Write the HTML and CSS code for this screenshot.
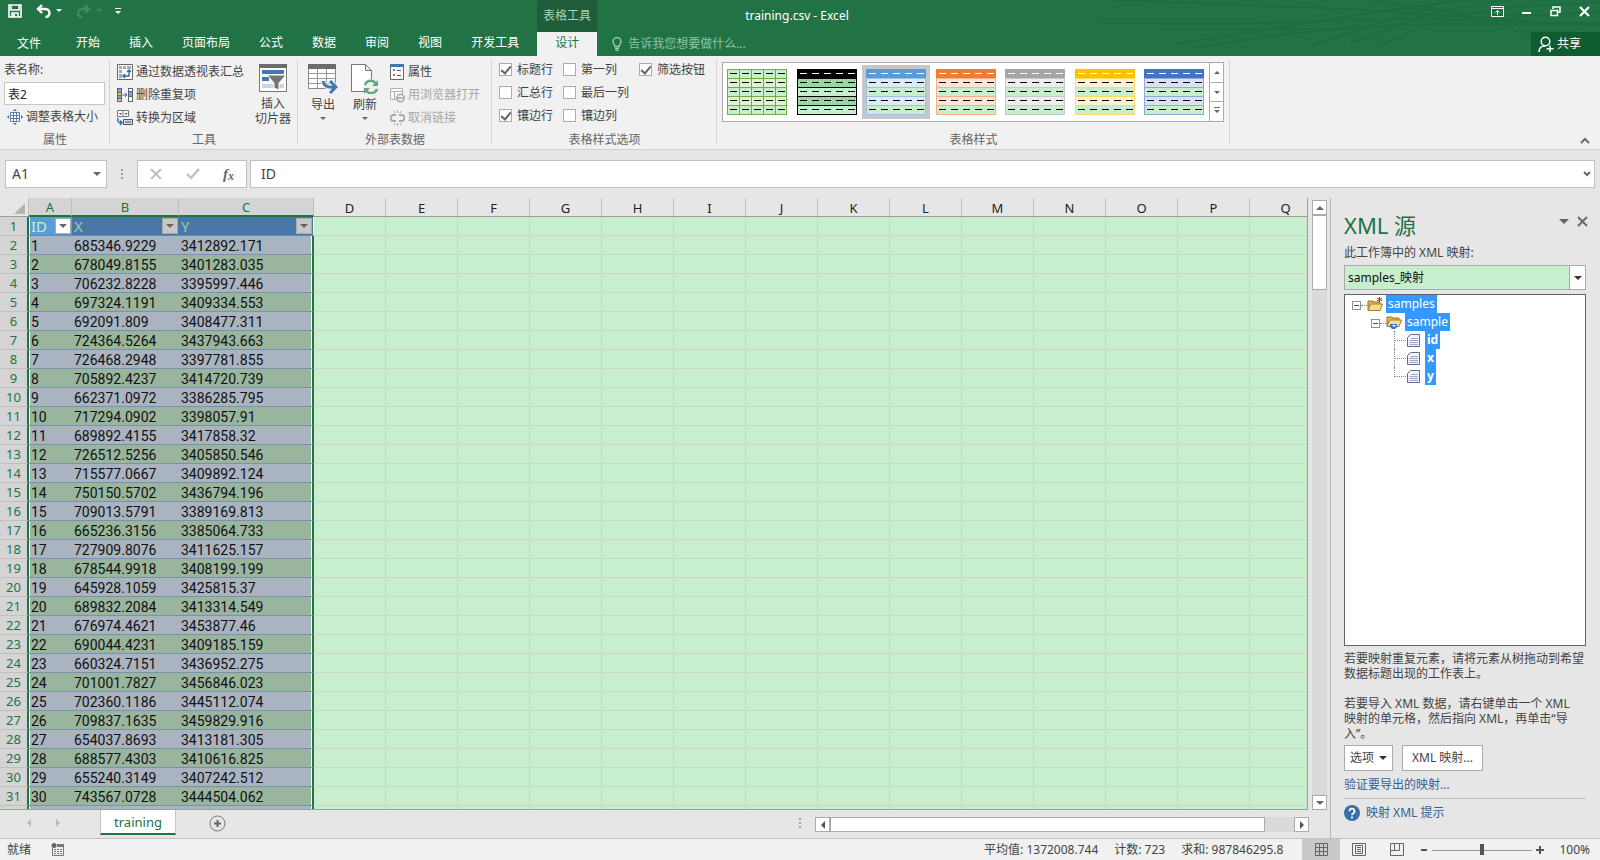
FILE: index.html
```
<!DOCTYPE html>
<html lang="zh-CN">
<head>
<meta charset="utf-8">
<title>training.csv - Excel</title>
<link rel="stylesheet" href="styles.css">
</head>
<body>
<header class="top">
  <svg class="swirl" width="500" height="56" viewBox="0 0 500 56" fill="none" stroke="#1e6b40" stroke-width="1.5" aria-hidden="true">
    <path d="M10 0L250 9L500 26M0 23L150 23L300 19L500 23M60 29L230 29L330 24L500 24M75 44L170 29L290 10L370 0M95 48L170 36L260 27M270 0L330 8L400 24L445 44M210 46L320 10L350 0M250 43L330 14L400 0M280 46L340 18L420 6L500 3M300 8L420 16L500 12"/>
  </svg>
  <div class="titlebar">
    <div class="title-left">
      <div class="qat">
        <button aria-label="保存"><svg width="14" height="14" viewBox="0 0 14 14"><path d="M1 1h12v12H1zM3 1v5h8V1M4 13V9h6v4" fill="none" stroke="#fff" stroke-width="1.6"/><path d="M5 10h2v3H5z" fill="#fff"/></svg></button>
        <button class="undo" aria-label="撤消"><svg width="26" height="14" viewBox="0 0 26 14"><path d="M2 5H9.500a4 4 0 0 1 0 8M6 1L2 5l4 4" fill="none" stroke="#fff" stroke-width="2.400"/><path d="M20 5h6l-3 3z" fill="#fff"/></svg></button>
        <button class="redo" aria-label="恢复" disabled><svg width="26" height="14" viewBox="0 0 26 14"><path d="M13 5H6a4 4 0 0 0 0 8M9 1l4 4-4 4" fill="none" stroke="#438a61" stroke-width="2.400"/><path d="M20 5h6l-3 3z" fill="#438a61"/></svg></button>
        <button class="more" aria-label="自定义"><svg width="6" height="7" viewBox="0 0 6 7"><path d="M0 0h6v1H0zM0 3h6L3 6z" fill="#fff"/></svg></button>
      </div>
      <div class="context">表格工具</div>
    </div>
    <div class="title">training.csv - Excel</div>
    <div class="winctl">
      <button aria-label="功能区显示选项"><svg width="13" height="11" viewBox="0 0 13 11"><path d="M.5.5h12v10H.5zM.5 2.500h12M6.500 9V5M4.500 6.500l2-2 2 2" fill="none" stroke="#fff"/></svg></button>
      <button aria-label="最小化"><svg width="10" height="11" viewBox="0 0 10 11"><path d="M0 6h9v2H0z" fill="#fff"/></svg></button>
      <button aria-label="还原"><svg width="11" height="11" viewBox="0 0 11 11"><path d="M3 3V1h7v5H8M1 4.500h6.500v5H1z" fill="none" stroke="#fff" stroke-width="1.500"/></svg></button>
      <button aria-label="关闭"><svg width="11" height="11" viewBox="0 0 11 11"><path d="M1 1l9 9M10 1l-9 9" stroke="#fff" stroke-width="2.200"/></svg></button>
    </div>
  </div>
  <nav class="tabs">
    <a class="file" href="#">文件</a><a href="#">开始</a><a href="#">插入</a><a href="#">页面布局</a><a href="#">公式</a><a href="#">数据</a><a href="#">审阅</a><a href="#">视图</a><a href="#">开发工具</a><a class="active" href="#">设计</a>
    <label class="tell"><svg width="10" height="14" viewBox="0 0 10 14"><path d="M3 9.500C3 7.500 1 7 1 4.500a4 4 0 0 1 8 0C9 7 7 7.500 7 9.500zM3 11.500h4M3.500 13.300h3" fill="none" stroke="#9fd0b2" stroke-width="1.300"/></svg><input type="text" placeholder="告诉我您想要做什么..." aria-label="告诉我"></label>
    <button class="share"><svg width="16" height="17" viewBox="0 0 16 17"><path d="M1 16c0-4 2-6 6-6M12 9.500v6.500M8.500 12.700h7" fill="none" stroke="#fff" stroke-width="1.500"/><circle cx="7.500" cy="5.500" r="4.300" fill="none" stroke="#fff" stroke-width="1.500"/></svg>共享</button>
  </nav>
</header>

<section class="ribbon">
  <div class="group g-prop">
    <div class="body col">
      <label for="tname">表名称:</label>
      <input id="tname" class="tname" type="text" value="表2">
      <button class="cmd resize"><svg width="16" height="16" viewBox="0 0 16 16"><path d="M3.500 3.500h9v9h-9zM6.500 3.500v9M9.500 3.500v9M3.500 6.500h9M3.500 9.500h9" fill="#fff" stroke="#5a7fa8"/><path d="M8 0l2 2H6zM8 16l2-2H6zM0 8l2-2v4zM16 8l-2-2v4z" fill="#3f6d9f"/></svg>调整表格大小</button>
    </div>
    <div class="caption">属性</div>
  </div>
  <div class="group g-tools">
    <div class="body">
      <div class="col">
        <button class="cmd"><svg width="16" height="16" viewBox="0 0 16 16"><path d="M.5.500h15v15H.5z" fill="#fff" stroke="#666"/><path d="M2 2h3v3H2zM6 2h3v3H6zM10 2h4v3h-4zM2 6h3v3H2zM2 10h3v4H2z" fill="#aaa"/><path d="M12 6v6H6M10 8l2-2 2 2M8 10l-2 2 2 2" fill="none" stroke="#2f68a8" stroke-width="1.400"/></svg>通过数据透视表汇总</button>
        <button class="cmd"><svg width="16" height="14" viewBox="0 0 16 14"><path d="M0 0h5v14H0zM11 0h5v14h-5z" fill="#5b6670"/><path d="M1 1h3v3H1zM1 8h3v2H1zM12 4h3v4h-3z" fill="#7ba3cf"/><path d="M1 5h3v2H1zM1 11h3v2H1z" fill="#f4c46c"/><path d="M12 1h3v2h-3zM12 9h3v4h-3z" fill="#fff"/><path d="M5.500 7H10M8 5l2 2-2 2" fill="none" stroke="#2f68a8"/></svg>删除重复项</button>
        <button class="cmd"><svg width="16" height="16" viewBox="0 0 16 16"><path d="M.5.500h11v6H.5zM6 .5v6" fill="#fff" stroke="#777"/><path d="M2 3h3L3.500 5zM7.500 3h3L9 5z" fill="#555"/><path d="M6.500 9.500h9v5h-9z" fill="#c9dcf0" stroke="#555"/><path d="M8 12h6" stroke="#555"/><path d="M1 8c-1 4 1 5 4 4.500M3 10.500l2 2-2 2.500" fill="none" stroke="#2f68a8" stroke-width="1.400"/></svg>转换为区域</button>
      </div>
      <button class="big slicer"><svg width="28" height="28" viewBox="0 0 28 28"><path d="M.5.500h27v27H.5z" fill="#fff" stroke="#777"/><path d="M0 0h28v4H0z" fill="#6b6b6b"/><path d="M3 6h22v4H3zM3 13h7v4H3z" fill="#3f78b5"/><path d="M3 20h22v4H3z" fill="#c9d6e4"/><path d="M8 11h19l-7 8v7l-5-2v-5z" fill="#747474" stroke="#fff"/></svg><span>插入</span><span>切片器</span></button>
    </div>
    <div class="caption">工具</div>
  </div>
  <div class="group g-ext">
    <div class="body">
      <button class="big"><svg width="30" height="30" viewBox="0 0 30 30"><path d="M.5.500h27v24H.5z" fill="#fff" stroke="#888"/><path d="M.5 9.500h27M.5 14.500h27M.5 19.500h27M9.500 4v20M18.500 4v20" stroke="#999" fill="none"/><path d="M0 0h28v5H0z" fill="#6b6b6b"/><path d="M15 17c1 5 5 7 12 6M22 17l6 6-6 6" fill="none" stroke="#f0f0f0" stroke-width="5"/><path d="M15 17c1 5 5 7 12 6M22 17l6 6-6 6" fill="none" stroke="#3f78b5" stroke-width="3"/></svg><span>导出</span><i class="tri"></i></button>
      <button class="big"><svg width="28" height="30" viewBox="0 0 28 30"><path d="M.5.500h14l6 6v21H.5zM14.500.500v6h6" fill="#fff" stroke="#777"/><circle cx="20" cy="23" r="8" fill="#f0f0f0"/><path d="M14 21a6 6 0 0 1 11-1M26 25a6 6 0 0 1-11 1" fill="none" stroke="#68a583" stroke-width="2.500"/><path d="M27 16v6h-6zM13 30v-6h6z" fill="#68a583"/></svg><span>刷新</span><i class="tri"></i></button>
      <div class="col">
        <button class="cmd"><svg width="15" height="16" viewBox="0 0 15 16"><path d="M.5.500h13v15H.5z" fill="#fff" stroke="#666"/><path d="M0 0h14v3H0z" fill="#3f78b5"/><path d="M7 6.500h4M7 11.500h4M3.500 5.500h1v1h-1zM3.500 10.500h1v1h-1z" stroke="#555" fill="none"/></svg>属性</button>
        <button class="cmd" disabled><svg width="15" height="16" viewBox="0 0 15 16"><path d="M.5 1.500h12v11H.5zM.5 4.500h12M4.500 4.500v8" fill="#fafafa" stroke="#b0b0b0"/><circle cx="10.500" cy="11" r="3.700" fill="#f0f0f0" stroke="#a8a8a8" stroke-width="1.500"/><path d="M7 11h7" stroke="#a8a8a8" stroke-width="1.500"/></svg>用浏览器打开</button>
        <button class="cmd" disabled><svg width="15" height="16" viewBox="0 0 15 16"><path d="M6 5H3.500a3 3 0 0 0 0 6H6M9 5h2.500a3 3 0 0 1 0 6H9" fill="none" stroke="#a8a8a8" stroke-width="2"/><path d="M7.500 0v3M7.500 13v3M4 1l1 2M11 1l-1 2M4 15l1-2M11 15l-1-2" stroke="#a8a8a8"/></svg>取消链接</button>
      </div>
    </div>
    <div class="caption">外部表数据</div>
  </div>
  <div class="group g-opt">
    <div class="body checks">
      <label><input type="checkbox" checked>标题行</label><label><input type="checkbox">第一列</label><label><input type="checkbox" checked>筛选按钮</label>
      <label><input type="checkbox">汇总行</label><label><input type="checkbox">最后一列</label><span></span>
      <label><input type="checkbox" checked>镶边行</label><label><input type="checkbox">镶边列</label><span></span>
    </div>
    <div class="caption">表格样式选项</div>
  </div>
  <div class="group g-style">
    <div class="body">
      <div class="gallery">
        <div class="swatches" id="swatches"></div>
        <div class="gal-nav">
          <button aria-label="上一行"><i class="tri up"></i></button>
          <button aria-label="下一行"><i class="tri"></i></button>
          <button aria-label="其他"><i class="tri bar"></i></button>
        </div>
      </div>
    </div>
    <div class="caption">表格样式</div>
  </div>
  <button class="collapse" aria-label="折叠功能区"><svg width="10" height="7" viewBox="0 0 10 7"><path d="M1 6l4-4 4 4" fill="none" stroke="#6a6a6a" stroke-width="2"/></svg></button>
</section>

<section class="formula">
  <div class="namebox"><input type="text" value="A1" aria-label="名称框"><button aria-label="名称列表"><i class="tri wide"></i></button></div>
  <span class="dots"></span>
  <div class="fx">
    <button aria-label="取消"><svg width="12" height="12" viewBox="0 0 12 12"><path d="M1 1l10 10M11 1L1 11" stroke="#bdbdbd" stroke-width="1.800"/></svg></button>
    <button aria-label="输入"><svg width="14" height="12" viewBox="0 0 14 12"><path d="M1 6l4 4 8-9" fill="none" stroke="#bdbdbd" stroke-width="2.200"/></svg></button>
    <button class="fxb" aria-label="插入函数">f<small>x</small></button>
  </div>
  <div class="fbar"><input type="text" value="ID" aria-label="编辑栏"><button aria-label="展开编辑栏"><svg width="8" height="6" viewBox="0 0 8 6"><path d="M1 1l3 3 3-3" fill="none" stroke="#666" stroke-width="2"/></svg></button></div>
</section>

<main class="work">
  <div class="left">
    <div class="sheetrow">
      <div class="sheet">
        <table class="grid">
          <colgroup><col class="c-h"><col class="c-a"><col class="c-b"><col class="c-c"><col span="14" class="c-d"></colgroup>
          <thead id="ghead"></thead>
          <tbody id="gbody"></tbody>
        </table>
      </div>
      <div class="vscroll"><button aria-label="向上滚动"><i class="tri up big-t"></i></button><div class="vthumb"></div><div class="fill"></div><button aria-label="向下滚动"><i class="tri big-t"></i></button></div>
    </div>
    <div class="sheetbar">
      <button class="nav1" aria-label="上一个工作表"><i class="tri l pale"></i></button>
      <button class="nav2" aria-label="下一个工作表"><i class="tri r pale"></i></button>
      <a class="sheettab" href="#">training</a>
      <button class="add" aria-label="新工作表"><svg width="17" height="17" viewBox="0 0 17 17"><circle cx="8.500" cy="8.500" r="7.500" fill="none" stroke="#777"/><path d="M8.500 5v7M5 8.500h7" stroke="#666" stroke-width="2"/></svg></button>
      <span class="dots"></span>
      <div class="hscroll"><button aria-label="向左滚动"><i class="tri l"></i></button><div class="hthumb"></div><div class="fill"></div><button aria-label="向右滚动"><i class="tri r"></i></button></div>
    </div>
  </div>
  <aside class="pane">
    <div class="pane-head"><h2>XML 源</h2><button aria-label="任务窗格选项"><i class="tri pane-t"></i></button><button aria-label="关闭窗格"><svg width="11" height="11" viewBox="0 0 11 11"><path d="M1 1l9 9M10 1l-9 9" stroke="#6a6a6a" stroke-width="2"/></svg></button></div>
    <label class="maplabel" for="map">此工作簿中的 XML 映射:</label>
    <div class="selwrap"><select id="map"><option>samples_映射</option></select><span class="selarrow"><i class="tri wide dark"></i></span></div>
    <ul class="tree" id="tree">
      <li class="lv0"><i class="pm"></i><svg width="16" height="15" viewBox="0 0 16 15"><path d="M1 4h5l1 1h6v8H1z" fill="#e3b04e" stroke="#9c7428"/><path d="M3.500 7H15.500L13 13.500H1z" fill="#fbdc86" stroke="#a67e2e"/><path d="M12.500 0v5M10 1.200l5 2.600M15 1.200l-5 2.600" stroke="#e02020"/></svg><span>samples</span></li>
      <li class="lv1"><i class="pm"></i><svg width="16" height="15" viewBox="0 0 16 15"><path d="M1 2h5l1 1h6v8H1z" fill="#e3b04e" stroke="#9c7428"/><path d="M3.500 5H15.500L13 11.500H1z" fill="#fbdc86" stroke="#a67e2e"/><path d="M4 9h7v3l-2 2H6l-2-2z" fill="#3f78c8"/><path d="M6 10h4l-2 2z" fill="#fff"/></svg><span>sample</span></li>
      <li class="lv2"><svg width="13" height="13" viewBox="0 0 13 13"><path d="M3.500.500h9v12h-12v-9z" fill="#f2f5fc" stroke="#5d6b92"/><path d="M4 4.500h7M2.500 6.500H11M2.500 8.500H11M2.500 10.500H11" stroke="#9aa8cc"/></svg><span>id</span></li>
      <li class="lv2"><svg width="13" height="13" viewBox="0 0 13 13"><path d="M3.500.500h9v12h-12v-9z" fill="#f2f5fc" stroke="#5d6b92"/><path d="M4 4.500h7M2.500 6.500H11M2.500 8.500H11M2.500 10.500H11" stroke="#9aa8cc"/></svg><span>x</span></li>
      <li class="lv2"><svg width="13" height="13" viewBox="0 0 13 13"><path d="M3.500.500h9v12h-12v-9z" fill="#f2f5fc" stroke="#5d6b92"/><path d="M4 4.500h7M2.500 6.500H11M2.500 8.500H11M2.500 10.500H11" stroke="#9aa8cc"/></svg><span>y</span></li>
    </ul>
    <p class="hint">若要映射重复元素，请将元素从树拖动到希望数据标题出现的工作表上。</p>
    <p class="hint">若要导入 XML 数据，请右键单击一个 XML<br>映射的单元格，然后指向 XML，再单击“导<br>入”。</p>
    <div class="btns"><button>选项<i class="tri wide dark"></i></button><button class="wide-b">XML 映射...</button></div>
    <a class="verify" href="#">验证要导出的映射...</a>
    <a class="tips" href="#"><svg width="16" height="16" viewBox="0 0 16 16"><circle cx="8" cy="8" r="8" fill="#376fa8"/><path d="M5.500 6.200a2.500 2.500 0 1 1 3.800 2C8.300 8.800 8 9 8 10.300M8 11.500v2" fill="none" stroke="#fff" stroke-width="1.800"/></svg>映射 XML 提示</a>
  </aside>
</main>

<footer class="status">
  <span class="ready">就绪</span>
  <svg width="13" height="13" viewBox="0 0 13 13"><path d="M1.500 5v7.500h11v-10H6" fill="none" stroke="#777"/><circle cx="3" cy="2.500" r="2.500" fill="#666"/><path d="M6 1h7v3H6z" fill="#777"/><path d="M3 6.500h8M3 8.500h8M3 10.500h8" stroke="#777" stroke-dasharray="2 1"/></svg>
  <span class="stat first">平均值: 1372008.744</span><span class="stat">计数: 723</span><span class="stat">求和: 987846295.8</span>
  <div class="views">
    <button class="on" aria-label="普通"><svg width="13" height="13" viewBox="0 0 13 13"><path d="M.5.500h12v12H.5zM4.500.500v12M8.500.500v12M.5 4.500h12M.5 8.500h12" fill="none" stroke="#666"/></svg></button>
    <button aria-label="页面布局"><svg width="14" height="13" viewBox="0 0 14 13"><path d="M.5.500h13v12H.5zM3.500 2.500h7v8h-7zM5 4.500h4M5 6.500h4M5 8.500h4" fill="none" stroke="#666"/></svg></button>
    <button aria-label="分页预览"><svg width="14" height="13" viewBox="0 0 14 13"><path d="M.5.500h13v12H.5zM4.500.500v7M9.500.500v7M.5 7.500h9" fill="none" stroke="#666"/></svg></button>
  </div>
  <div class="zoom">
    <button aria-label="缩小"><svg width="8" height="8" viewBox="0 0 8 8"><path d="M1 3h6v2H1z" fill="#555"/></svg></button>
    <input type="range" min="10" max="190" value="100" aria-label="缩放">
    <button aria-label="放大"><svg width="8" height="8" viewBox="0 0 8 8"><path d="M0 4h8M4 0v8" stroke="#555" stroke-width="2"/></svg></button>
    <span>100%</span>
  </div>
</footer>
<script src="grid.js"></script>
</body>
</html>
```
FILE: styles.css
```
* { box-sizing: border-box; }
html, body { height: 100%; margin: 0; }
body {
  display: flex; flex-direction: column; overflow: hidden;
  font-family: "Noto Sans", "Noto Sans CJK SC", sans-serif;
  font-size: 12px; line-height: 16px; color: #444; background: #e6e6e6;
}
button, input, select { font: inherit; color: inherit; margin: 0; padding: 0; border: 0; background: none; border-radius: 0; }
button { display: inline-flex; align-items: center; justify-content: center; }
a { color: inherit; text-decoration: none; }
svg { display: block; flex: none; }
ul { list-style: none; margin: 0; padding: 0; }

.tri { display: block; flex: none; width: 0; height: 0; border: 3px solid transparent; border-top-color: #666; border-bottom: 0; }
.tri.up { border-bottom: 3px solid #666; border-top: 0; }
.tri.wide { border-width: 4px 4px 0; }
.tri.dark { border-top-color: #333; }
.tri.big-t { border-width: 4px 4px 0; }
.tri.up.big-t { border-width: 0 4px 4px; }
.tri.pane-t { border-width: 5px 5px 0; }
.tri.l { border: 4px solid transparent; border-left: 0; border-right-color: #555; }
.tri.r { border: 4px solid transparent; border-right: 0; border-left-color: #555; }
.tri.l.pale { border-right-color: #bbb; }
.tri.r.pale { border-left-color: #bbb; }
.tri.bar { position: relative; }
.tri.bar::before { content: ""; position: absolute; left: -3px; top: -6px; width: 6px; height: 1px; background: #666; }

/* title bar and tabs */
.top { position: relative; background: #217346; color: #fff; flex: none; }
.swirl { position: absolute; right: 0; top: 0; }
.titlebar, .tabs { position: relative; display: flex; }
.titlebar { display: grid; grid-template-columns: 1fr auto 1fr; height: 32px; padding-right: 6px; }
.title-left { display: flex; }
.qat { display: flex; align-items: center; width: 537px; padding: 0 0 10px 8px; }
.undo { margin-left: 14px; }
.redo { margin-left: 14px; }
.more { margin-left: 13px; }
.context { width: 60px; line-height: 32px; text-align: center; background: #1e5c3a; color: #a9d3b8; }
.title { line-height: 32px; }
.winctl { display: flex; justify-content: flex-end; align-items: center; gap: 18px; padding: 0 4px 9px 0; }
.tabs { height: 24px; padding-left: 3px; line-height: 22px; }
.tabs a { padding: 0 14px 0 15px; white-space: nowrap; }
.tabs .file { padding: 1px 20px 0 14px; }
.tabs .active { width: 60px; margin-left: 4px; padding: 0; text-align: center; background: #f1f1f1; color: #217346; }
.tell { display: flex; align-items: center; gap: 6px; margin-left: 15px; }
.tell input { width: 160px; }
.tell input::placeholder { color: #8fc4a4; opacity: 1; }
.share { margin-left: auto; width: 69px; gap: 3px; padding-right: 12px; background: #0e5c2f; }

/* ribbon */
.ribbon { position: relative; display: flex; flex: none; height: 94px; padding: 2px 0 1px; background: #f1f1f1; border-bottom: 1px solid #d0d0d0; }
.group { display: flex; flex-direction: column; justify-content: space-between; position: relative; }
.group::after { content: ""; position: absolute; right: 0; top: 2px; bottom: 4px; width: 1px; background: #d5d5d5; }
.body { display: flex; height: 72px; padding-top: 2px; }
.col { display: flex; flex-direction: column; }
.caption { text-align: center; color: #666; line-height: 16px; }
.cmd { justify-content: flex-start; gap: 3px; height: 23px; white-space: nowrap; }
.cmd:disabled { color: #a6a6a6; }
.big { flex-direction: column; justify-content: flex-start; line-height: 15px; padding-top: 4px; }
.big svg { margin-bottom: 3px; }
.big .tri { margin-top: 5px; }
.g-prop { width: 110px; }
.g-prop .body { padding-left: 4px; }
.g-prop label { line-height: 20px; }
.tname { width: 101px; height: 23px; margin-top: 2px; padding: 0 3px; background: #fff; border: 1px solid #c6c6c6; color: #222; }
.resize { margin: 0 0 0 3px; }
.g-tools { width: 188px; }
.g-tools .body { padding-left: 7px; justify-content: space-between; }
.slicer { width: 50px; }
.slicer svg { margin-bottom: 4px; }
.g-ext { width: 194px; }
.g-ext .body { padding-left: 4px; }
.g-ext .big { width: 42px; }
.g-ext .col { margin-left: 4px; }
.g-opt { width: 225px; }
.checks { display: grid; grid-template-columns: 64px 76px 1fr; grid-template-rows: repeat(3, 23px); padding: 0 0 0 7px; }
.checks label { display: flex; align-items: center; gap: 5px; white-space: nowrap; }
.checks input { appearance: none; width: 13px; height: 13px; background: #fff; border: 1px solid #ababab; position: relative; }
.checks input:checked::after { content: ""; position: absolute; left: 3px; top: 0; width: 4px; height: 8px; border: solid #666; border-width: 0 2px 2px 0; transform: rotate(40deg); }
.g-style { width: 513px; }
.g-style .body { padding: 4px 6px 0 5px; }
.gallery { display: flex; flex: 1; height: 60px; background: #fff; border: 1px solid #ababab; }
.swatches { display: flex; flex: 1; justify-content: space-between; align-items: center; padding: 0 1px 0 0; }
.sw { padding: 4px; }
.sw.sel { background: #c6c6c6; }
.gal-nav { width: 14px; display: flex; flex-direction: column; border-left: 1px solid #ababab; }
.gal-nav button { flex: 1; }
.gal-nav button + button { border-top: 1px solid #ababab; }
.collapse { margin-left: auto; align-self: flex-end; padding: 0 10px 4px 0; }

/* formula bar */
.formula { display: flex; flex: none; align-items: center; height: 48px; padding: 0 5px; }
.namebox, .fx, .fbar { display: flex; height: 28px; background: #fff; border: 1px solid #c0c0c0; font-size: 14px; }
.namebox { width: 102px; padding: 0 5px 0 6px; }
.namebox input { flex: 1; min-width: 0; }
.dots { width: 2px; height: 11px; margin: 0 14px; background: repeating-linear-gradient(#a0a0a0 0 2px, transparent 2px 4px); }
.fx { width: 110px; justify-content: space-between; padding: 0 12px; }
.fxb { font: italic bold 15px "Liberation Serif", serif; color: #666; }
.fxb small { font-size: 12px; margin-top: 5px; }
.fbar { flex: 1; margin-left: 3px; padding: 0 3px 0 10px; }
.fbar input { flex: 1; }

/* sheet */
.work { flex: 1; display: flex; min-height: 0; }
.left { flex: 1; display: flex; flex-direction: column; min-width: 0; border-right: 1px solid #b5b5b5; }
.sheetrow { flex: 1; display: flex; min-height: 0; }
.sheet { flex: 1; overflow: hidden; border-bottom: 1px solid #8fa895; border-right: 1px solid #8fa895; background: linear-gradient(#e6e6e6 18px, #c7eecd 18px); }
.grid { table-layout: fixed; border-collapse: separate; border-spacing: 0; width: 1322px; }
.c-h { width: 29px; } .c-a { width: 43px; } .c-b { width: 107px; } .c-c { width: 135px; } .c-d { width: 72px; }
.grid th, .grid td { height: 19px; padding: 0; overflow: hidden; white-space: nowrap; line-height: 18px; }
.grid th { font-weight: 400; font-size: 13px; text-align: center; background: #e6e6e6; color: #222; }
.grid thead th { padding-top: 2px; line-height: 16px; border-right: 1px solid #bdbdbd; border-bottom: 1px solid #9c9c9c; background: #e6e6e6; }
.grid thead th.on, .grid tbody th { background: #d4d4d4; color: #217346; }
.grid thead th.on { border-bottom: 2px solid #217346; line-height: 15px; }
.grid thead .corner { padding: 0; }
.grid tbody th { border-bottom: 1px solid #c0c0c0; border-right: 2px solid #217346; }
.grid td { background: #c7eecd; border-right: 1px solid #cbd3cb; border-bottom: 1px solid #cbd3cb; }
.grid .num { font-family: Roboto, "Liberation Sans", sans-serif; font-size: 14px; color: #111; padding: 2px 0 0 2px; line-height: 16px; border-right: 0; border-bottom-color: #7893ab; background: #a9b4c0; }
.grid .even .num { background: #99b59d; }
.grid .last { border-right: 2px solid #217346; box-shadow: inset -1px 0 #fff; }
.grid .first { box-shadow: inset 1px 0 #fff; }
.grid .corner i { display: block; margin: 4px 3px 2px auto; width: 0; height: 0; border-left: 11px solid transparent; border-bottom: 11px solid #b5b5b5; }
.grid .hd { padding-left: 2px; border-right: 0; border-bottom-color: #5b8bb8; background: #4977a5; color: #a0c8b0; font-size: 15px; }
.grid .hd.first { background: #5b9bd5; color: #c7eecd; }
.hd div { display: flex; justify-content: space-between; align-items: center; height: 18px; }
.filter { width: 16px; height: 16px; background: #c8c8c8; border: 1px solid #aaa; margin-right: 1px; }
.last .filter { margin-right: 2px; }
.first .filter { background: #fff; }
.vscroll { width: 22px; display: flex; flex-direction: column; padding: 2px 3px 0 4px; }
.vscroll button, .hscroll button, .vthumb, .hthumb { background: #fff; border: 1px solid #ababab; flex: none; }
.vscroll button { height: 15px; width: 15px; }
.vthumb { height: 75px; }
.fill { flex: 1; background: #dadada; }
.sheetbar { flex: none; display: flex; height: 28px; align-items: flex-start; padding-right: 21px; }
.sheetbar > button { height: 26px; }
.nav1 { margin-left: 27px; } .nav2 { margin-left: 25px; }
.sheettab { width: 76px; height: 25px; margin-left: 40px; line-height: 24px; text-align: center; font-size: 13px; color: #217346; background: #fff; border: 1px solid #c6c6c6; border-top: 0; border-bottom: 2px solid #217346; }
.add { margin-left: 33px; }
.sheetbar .dots { margin: 8px 14px 0 auto; }
.hscroll { display: flex; width: 494px; height: 15px; margin-top: 7px; }
.hscroll button { width: 15px; }
.hthumb { width: 435px; }

/* XML source pane */
.pane { width: 269px; flex: none; display: flex; flex-direction: column; padding: 11px 14px 17px 13px; }
.pane-head { display: flex; align-items: center; gap: 8px; height: 32px; margin-right: -2px; }
.pane-head button { margin-bottom: 8px; }
h2 { flex: 1; margin: 0; font-size: 22px; font-weight: 400; line-height: 30px; color: #217346; }
.maplabel { line-height: 24px; }
.selwrap { display: flex; flex: none; height: 25px; background: #c7eecd; border: 1px solid #ababab; }
.selwrap select { flex: 1; appearance: none; padding-left: 3px; color: #111; }
.selarrow { display: flex; width: 16px; align-items: center; justify-content: center; background: #fff; border-left: 1px solid #ababab; }
.tree { flex: 1; min-height: 0; margin: 4px 0 5px; background: #fff; border: 1px solid #646464; overflow: hidden; }
.tree li { display: flex; align-items: center; height: 18px; color: #fff; }
.tree span { background: #3399ff; line-height: 18px; padding: 0 2px; margin-left: 3px; }
.lv0 { padding-left: 7px; }
.lv1 { padding-left: 26px; }
.pm { position: relative; width: 9px; height: 9px; margin: 2px 6px 0 0; border: 1px solid #919191; background: #fff; }
.pm::before { content: ""; position: absolute; left: 1px; top: 3px; width: 5px; height: 1px; background: #334a9c; }
.pm::after { content: ""; position: absolute; left: 8px; top: 3px; width: 6px; border-top: 1px dotted #888; }
.lv2 { padding-left: 49px; font-weight: 700; }
.lv2::before { content: ""; width: 12px; height: 18px; border-left: 1px dotted #888; background: repeating-linear-gradient(90deg, #888 0 1px, transparent 1px 2px) 0 9px / 12px 1px no-repeat; }
.lv2:last-child::before { height: 10px; align-self: flex-start; }
.tree .lv2 span { margin-left: 5px; }
.hint { margin: 0 -2px 15px 0; line-height: 15px; }
.hint + .hint { margin-bottom: 4px; }
.btns { display: flex; gap: 9px; }
.btns button { width: 49px; height: 26px; gap: 5px; background: #fff; border: 1px solid #ababab; }
.btns .wide-b { width: 81px; }
.verify { color: #376092; line-height: 27px; border-bottom: 1px solid #bdbdbd; }
.tips { display: flex; align-items: center; gap: 6px; margin-top: 6px; color: #376092; }

/* status bar */
.status { display: flex; flex: none; align-items: center; height: 22px; padding-left: 7px; background: #f1f1f1; border-top: 1px solid #c0c0c0; }
.ready { margin-right: 20px; }
.stat { margin-right: 16px; }
.stat.first { margin-left: auto; }
.views { display: flex; align-self: stretch; margin-left: 3px; }
.views button { width: 38px; }
.views .on { background: #c8c8c8; }
.zoom { display: flex; align-items: center; margin-left: 4px; padding-right: 10px; }
.zoom input { appearance: none; width: 100px; height: 12px; margin: 0 4px; background: linear-gradient(#999, #999) 0 6px / 100% 1px no-repeat; }
.zoom input::-webkit-slider-thumb { appearance: none; width: 4px; height: 11px; background: #555; }
.zoom span { margin-left: 15px; }
```
FILE: grid.js
```
const rows = `685346.9229 3412892.171
678049.8155 3401283.035
706232.8228 3395997.446
697324.1191 3409334.553
692091.809 3408477.311
724364.5264 3437943.663
726468.2948 3397781.855
705892.4237 3414720.739
662371.0972 3386285.795
717294.0902 3398057.91
689892.4155 3417858.32
726512.5256 3405850.546
715577.0667 3409892.124
750150.5702 3436794.196
709013.5791 3389169.813
665236.3156 3385064.733
727909.8076 3411625.157
678544.9918 3408199.199
645928.1059 3425815.37
689832.2084 3413314.549
676974.4621 3453877.46
690044.4231 3409185.159
660324.7151 3436952.275
701001.7827 3456846.023
702360.1186 3445112.074
709837.1635 3459829.916
654037.8693 3413181.305
688577.4303 3410616.825
655240.3149 3407242.512
743567.0728 3444504.062`.split("\n").map(line => line.split(" "));

const letters = "ABCDEFGHIJKLMNOPQ".split("");
const blanks = "<td></td>".repeat(14);

document.getElementById("ghead").innerHTML =
  '<tr><th class="corner"><i></i></th>' +
  letters.map((l, i) => `<th${i < 3 ? ' class="on"' : ""}>${l}</th>`).join("") + "</tr>";

const head = ["ID", "X", "Y"].map((t, i) =>
  `<td class="hd ${["first", "", "last"][i]}"><div>${t}<button class="filter" aria-label="筛选 ${t}"><i class="tri wide"></i></button></div></td>`).join("");

let html = `<tr><th>1</th>${head}${blanks}</tr>`;
rows.forEach(([x, y], i) => {
  html += `<tr class="${i % 2 ? "even" : "odd"}"><th>${i + 2}</th><td class="num first">${i + 1}</td><td class="num">${x}</td><td class="num last">${y}</td>${blanks}</tr>`;
});
html += `<tr class="odd"><th></th><td class="num first"></td><td class="num"></td><td class="num last"></td>${blanks}</tr>`;
document.getElementById("gbody").innerHTML = html;

// Table style thumbnails: [header, band, alternate band, rule, columns drawn]
const styles = [
  ["#c7eecd", "#dff3d0", "#c7eecd", "#70ad47", true],
  ["#000000", "#98d8a4", "#c7eecd", "#000000", false],
  ["#5b9bd5", "#ddebf7", "#c7eecd", "#9bc2e6", false],
  ["#ed7d31", "#fce4d6", "#c7eecd", "#f4b084", false],
  ["#a5a5a5", "#ededed", "#c7eecd", "#c9c9c9", false],
  ["#ffc000", "#fff2cc", "#c7eecd", "#ffd966", false],
  ["#4472c4", "#d9e1f2", "#c7eecd", "#8ea9db", false]
];
document.getElementById("swatches").innerHTML = styles.map(([h, a, b, rule, cols], n) => {
  let s = "";
  for (let r = 0; r < 5; r++) {
    const y = r * 9;
    s += `<rect x="0.5" y="${y + 0.5}" width="59" height="9" fill="${r === 0 ? h : r % 2 ? a : b}" stroke="${r === 0 ? (cols ? rule : h) : rule}"/>`;
    for (let c = 0; c < 5; c++) s += `<rect x="${c * 12 + 3}" y="${y + 4}" width="7" height="1" fill="${r === 0 && !cols ? "#fff" : "#000"}"/>`;
  }
  if (cols) for (let c = 1; c < 5; c++) s += `<rect x="${c * 12}" y="0" width="1" height="46" fill="${rule}"/>`;
  return `<button class="sw${n === 2 ? " sel" : ""}" aria-label="表格样式 ${n + 1}"><svg width="60" height="46" viewBox="0 0 60 46">${s}</svg></button>`;
}).join("");
```
